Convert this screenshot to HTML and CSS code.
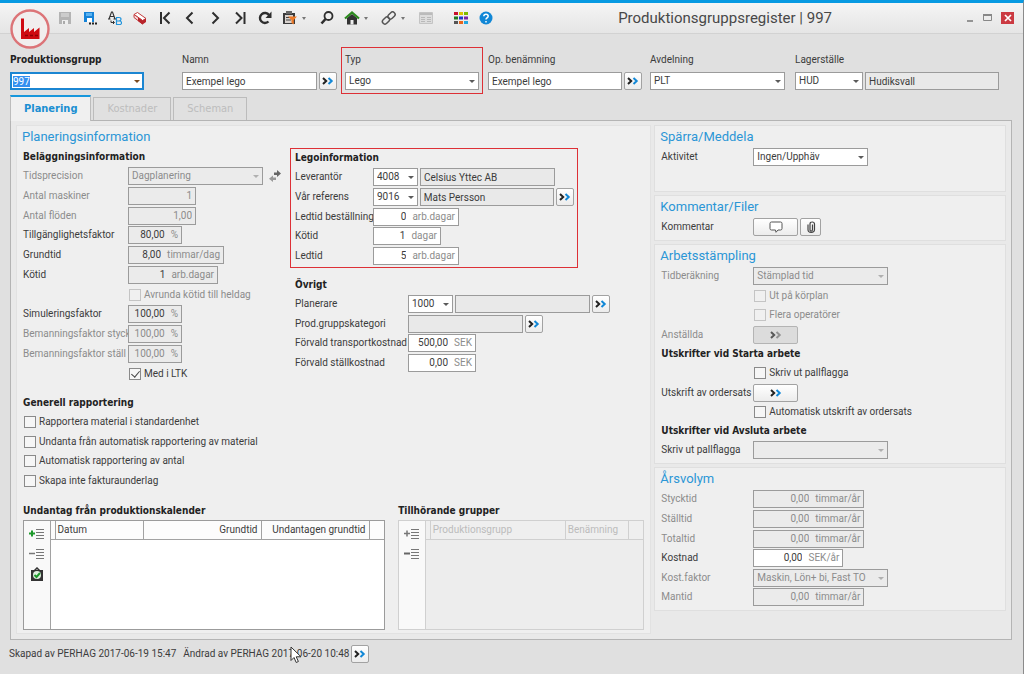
FILE: index.html
```html
<!DOCTYPE html>
<html lang="sv">
<head>
<meta charset="utf-8">
<title>Produktionsgruppsregister | 997</title>
<link rel="stylesheet" href="styles.css">
<script src="app.js" defer></script>
</head>
<body>
<svg class="defs" width="0" height="0" aria-hidden="true">
  <defs>
    <symbol id="chev" viewBox="0 0 12 8"><path class="chev-a" d="M1 1l3.2 3L1 7"/><path class="chev-b" d="M6.500 1l3.200 3-3.200 3"/></symbol>
    <symbol id="lines" viewBox="0 0 16 12"><path d="M7 1.500h8M7 4.500h8M7 7.500h8M7 10.500h8" stroke="#777" fill="none"/></symbol>
  </defs>
</svg>
<div class="window">
  <header class="titlebar">
    <svg class="logo" viewBox="0 0 40 40" aria-hidden="true"><circle cx="20" cy="20" r="18.500" fill="#f1eeee" stroke="#dc7478" stroke-width="2.400"/><path d="M11 30V9.500h3V23l5-4v4l5-4v4l5.500-4.500V30z" fill="#cf0a12"/><path d="M15 26.500h3m2 0h3m2 0h3" stroke="#8e0006" stroke-width="1.500"/></svg>
    <nav class="tools">
      <button class="tool" aria-label="Spara" disabled><svg width="14" height="14" viewBox="0 0 14 14"><path d="M1 1h12v12H1z" fill="#b4b4b4"/><path d="M3 2h8v4H3z" fill="#ccc"/><path d="M4 9h6v4H4z" fill="#eee"/><path d="M5 10h2v3H5z" fill="#aaa"/></svg></button>
      <button class="tool" aria-label="Spara som"><svg width="14" height="14" viewBox="0 0 14 14"><path d="M1 1h10v10H1z" fill="#1583d8"/><path d="M3 2h6v3H3z" fill="#5db3f0"/><path d="M4 7h5v4H4z" fill="#fff"/><path d="M6 12.500h2m1 0h2m1 0h2" stroke="#222" stroke-width="2"/></svg></button>
      <button class="tool" aria-label="Byt namn"><svg width="14" height="14" viewBox="0 0 14 14" fill="none"><path d="M1 8L3.500 1h1L7 8M2 5.500h4M0 8h2.500M5.500 8H8" stroke="#333" stroke-width="1.100"/><path d="M3 9.500v2h3M5 10l1.500 1.500L5 13" stroke="#333"/><path d="M8.500 6.500v7M8 6.500h3q2 0 2 1.700T11 10H9h2.500q2 0 2 1.800t-2 1.700H8" stroke="#2094dc" stroke-width="1.200"/></svg></button>
      <button class="tool" aria-label="Radera"><svg width="14" height="14" viewBox="0 0 14 14"><path d="M1 3.500L4.500 1.500 13 7.500 9.500 9.500z" fill="#fff" stroke="#c53a3c"/><path d="M1 3.500v3l8.500 6.500V9.500z" fill="#f4dada" stroke="#c53a3c"/><path d="M5 6.500l4.500 3L13 7.500v3.500L9.500 13.500 5 10z" fill="#b8242b"/></svg></button>
      <button class="tool" aria-label="Första"><svg class="stroke" width="12" height="14" viewBox="0 0 12 14"><path d="M2 1v12M10.500 1.500L5 7l5.500 5.500"/></svg></button>
      <button class="tool" aria-label="Föregående"><svg class="stroke" width="12" height="14" viewBox="0 0 12 14"><path d="M8.500 1.500L3 7l5.500 5.500"/></svg></button>
      <button class="tool" aria-label="Nästa"><svg class="stroke" width="12" height="14" viewBox="0 0 12 14"><path d="M3.500 1.500L9 7l-5.500 5.500"/></svg></button>
      <button class="tool" aria-label="Sista"><svg class="stroke" width="12" height="14" viewBox="0 0 12 14"><path d="M10.500 1v12M2 1.500L7.500 7 2 12.500"/></svg></button>
      <button class="tool" aria-label="Uppdatera"><svg width="14" height="14" viewBox="0 0 14 14"><path d="M10.500 10.500A5 5 0 1 1 11 4" fill="none" stroke="#2e2e2e" stroke-width="2.400"/><path d="M13.500 0.500v6.500H7.500z" fill="#2e2e2e"/></svg></button>
      <button class="tool tool-drop" aria-label="Klistra in"><svg width="15" height="14" viewBox="0 0 15 14"><path d="M1 2h12v11H1z" fill="#3b3b3b"/><path d="M4 0h6v3H4z" fill="#666"/><path d="M3 4h8v8H3z" fill="#d8d2ce"/><path d="M4 6.500h6M4 9h5" stroke="#444"/><path d="M6 5.500h9L11.800 9v4.500L9.500 12V9z" fill="#ee7a28"/></svg></button>
      <button class="tool" aria-label="Sök"><svg width="14" height="14" viewBox="0 0 14 14" fill="none" stroke="#2e2e2e"><circle cx="8.500" cy="5" r="4" stroke-width="1.800"/><path d="M5.500 8L1.500 12.500" stroke-width="2.600"/></svg></button>
      <button class="tool tool-drop" aria-label="Hem"><svg width="16" height="14" viewBox="0 0 16 14"><path d="M3 7l5-4 5 4v6.500H3z" fill="#333"/><path d="M6.500 9h3v4.500h-3z" fill="#eee"/><path d="M1 7.500L8 1.500l7 6" fill="none" stroke="#2c8a1e" stroke-width="2.200"/></svg></button>
      <button class="tool tool-drop" aria-label="Länk"><svg width="15" height="14" viewBox="0 0 15 14" fill="none" stroke="#555" stroke-width="1.500"><rect x="6.500" y="2" width="8" height="5" rx="2.500" transform="rotate(-45 10.500 4.500)"/><rect x="1" y="7" width="8" height="5" rx="2.500" transform="rotate(-45 5 9.500)"/></svg></button>
      <button class="tool" aria-label="Lista" disabled><svg width="14" height="12" viewBox="0 0 14 12"><path d="M.5.500h13v11H.5z" fill="#ddd" stroke="#c4c4c4"/><path d="M1 2h12" stroke="#bbb" stroke-width="2"/><path d="M2 5.500h4M8 5.500h4M2 7.500h4M8 7.500h4M2 9.500h4M8 9.500h4" stroke="#b9b9b9"/></svg></button>
      <button class="tool tool-apart" aria-label="Moduler"><svg width="14" height="14" viewBox="0 0 14 14"><path d="M0 1h4v3H0z" fill="#c8102e"/><path d="M5 1h4v3H5z" fill="#d9c400"/><path d="M10 1h4v3h-4z" fill="#7fba00"/><path d="M0 5.500h4v3H0z" fill="#1f7a1f"/><path d="M5 5.500h4v3H5z" fill="#2038c8"/><path d="M10 5.500h4v3h-4z" fill="#7a22a8"/><path d="M0 10h4v3H0z" fill="#555"/><path d="M5 10h4v3H5z" fill="#e8641b"/><path d="M10 10h4v3h-4z" fill="#22a7e0"/></svg></button>
      <button class="tool" aria-label="Hjälp"><svg width="14" height="14" viewBox="0 0 14 14"><circle cx="7" cy="7" r="6.500" fill="#1187d6"/><path d="M4.800 5.300Q4.900 3.200 7 3.200t2.200 1.900Q9.200 6.300 7.900 7 7 7.500 7 8.600M7 10v1.600" fill="none" stroke="#fff" stroke-width="1.500"/></svg></button>
    </nav>
    <h1 class="title">Produktionsgruppsregister | 997</h1>
    <div class="winctl">
      <button class="ctl" aria-label="Minimera"><svg width="8" height="10" viewBox="0 0 8 10"><path d="M1 8h6" stroke="#777" stroke-width="1.500"/></svg></button>
      <button class="ctl" aria-label="Maximera"><svg width="9" height="8" viewBox="0 0 9 8"><path d="M.5 1.500h8v5h-8z" fill="none" stroke="#888"/><path d="M0 1h9" stroke="#888" stroke-width="2"/></svg></button>
      <button class="ctl ctl-close" aria-label="Stäng"><svg width="8" height="8" viewBox="0 0 8 8"><path d="M1 1l6 6M7 1L1 7" stroke="#fff" stroke-width="1.700"/></svg></button>
    </div>
  </header>

  <section class="keys">
    <div class="field field-first"><label class="strong" for="pg">Produktionsgrupp</label><div class="line"><span class="combo grow focus"><input id="pg" class="ctrl" value="997"></span></div></div>
    <div class="field field-name"><label for="namn">Namn</label><div class="line"><input id="namn" class="ctrl grow" value="Exempel lego"><button class="go" aria-label="Visa namn"><svg class="chev"><use href="#chev"/></svg></button></div></div>
    <div class="field field-type"><label for="typ">Typ</label><div class="line"><span class="combo grow"><select id="typ" class="ctrl"><option>Lego</option></select></span></div></div>
    <div class="field field-op"><label for="op">Op. benämning</label><div class="line"><input id="op" class="ctrl grow" value="Exempel lego"><button class="go" aria-label="Visa benämning"><svg class="chev"><use href="#chev"/></svg></button></div></div>
    <div class="field field-avd"><label for="avd">Avdelning</label><div class="line"><span class="combo grow"><select id="avd" class="ctrl"><option>PLT</option></select></span></div></div>
    <div class="field"><label for="lager">Lagerställe</label><div class="line"><span class="combo w68"><select id="lager" class="ctrl"><option>HUD</option></select></span><input class="ctrl grow" aria-label="Lagernamn" value="Hudiksvall" readonly></div></div>
  </section>

  <div class="tabs" role="tablist">
    <button class="tab tab-on" role="tab" aria-selected="true">Planering</button>
    <button class="tab" role="tab" disabled>Kostnader</button>
    <button class="tab" role="tab" disabled>Scheman</button>
  </div>

  <main class="sheet">
    <section class="plan">
      <h2>Planeringsinformation</h2>
      <div class="plan-cols">
        <div class="stack col-a">
          <h3>Beläggningsinformation</h3>
          <div class="rows">
            <div class="row off"><label for="tp">Tidsprecision</label><span class="combo w135"><select id="tp" class="ctrl" disabled><option>Dagplanering</option></select></span><svg class="swap" width="12" height="12" viewBox="0 0 12 12" aria-hidden="true"><path d="M5 2.500h3V0l4 3.500L8 7V5H5z" fill="#666"/><path d="M7 7.500H4V5.500L0 8.700 4 12v-2h3z" fill="#999"/></svg></div>
            <div class="row off"><label for="am">Antal maskiner</label><span class="unit w68"><input id="am" value="1" disabled></span></div>
            <div class="row off"><label for="af">Antal flöden</label><span class="unit w68"><input id="af" value="1,00" disabled></span></div>
          </div>
          <div class="rows">
            <div class="row"><label for="tf">Tillgänglighetsfaktor</label><span class="unit ro w54"><input id="tf" value="80,00" readonly><span>%</span></span></div>
            <div class="row"><label for="gt">Grundtid</label><span class="unit ro w96"><input id="gt" value="8,00" readonly><span>timmar/dag</span></span></div>
            <div class="row"><label for="kt">Kötid</label><span class="unit ro w90"><input id="kt" value="1" readonly><span>arb.dagar</span></span></div>
            <div class="row off"><span class="blank"></span><label class="check"><input type="checkbox" disabled>Avrunda kötid till heldag</label></div>
          </div>
          <div class="rows">
            <div class="row"><label for="sf">Simuleringsfaktor</label><span class="unit ro w54"><input id="sf" value="100,00" readonly><span>%</span></span></div>
            <div class="row off"><label for="bs">Bemanningsfaktor styck</label><span class="unit w54"><input id="bs" value="100,00" disabled><span>%</span></span></div>
            <div class="row off"><label for="bt">Bemanningsfaktor ställ</label><span class="unit w54"><input id="bt" value="100,00" disabled><span>%</span></span></div>
            <div class="row"><span class="blank"></span><label class="check"><input type="checkbox" checked>Med i LTK</label></div>
          </div>
        </div>
        <div class="col-b">
          <div class="stack lego">
            <h3>Legoinformation</h3>
            <div class="rows">
              <div class="row"><label for="lev">Leverantör</label><span class="combo w44"><select id="lev" class="ctrl"><option>4008</option></select></span><input class="ctrl w135" aria-label="Leverantörsnamn" value="Celsius Yttec AB" readonly></div>
              <div class="row"><label for="ref">Vår referens</label><span class="combo w44"><select id="ref" class="ctrl"><option>9016</option></select></span><input class="ctrl w135" aria-label="Referensnamn" value="Mats Persson" readonly><button class="go" aria-label="Visa referens"><svg class="chev"><use href="#chev"/></svg></button></div>
              <div class="row"><label for="lb">Ledtid beställning</label><span class="unit w86"><input id="lb" value="0"><span>arb.dagar</span></span></div>
            </div>
            <div class="rows">
              <div class="row"><label for="lk">Kötid</label><span class="unit w68"><input id="lk" value="1"><span>dagar</span></span></div>
              <div class="row"><label for="lt">Ledtid</label><span class="unit w86"><input id="lt" value="5"><span>arb.dagar</span></span></div>
            </div>
          </div>
          <div class="stack other">
            <h3>Övrigt</h3>
            <div class="rows">
              <div class="row"><label for="pl">Planerare</label><span class="combo w44"><select id="pl" class="ctrl"><option>1000</option></select></span><input class="ctrl w135" aria-label="Planerarens namn" readonly><button class="go" aria-label="Visa planerare"><svg class="chev"><use href="#chev"/></svg></button></div>
              <div class="row"><label for="pk">Prod.gruppskategori</label><input id="pk" class="ctrl w114" readonly><button class="go" aria-label="Visa kategori"><svg class="chev"><use href="#chev"/></svg></button></div>
            </div>
            <div class="rows">
              <div class="row"><label for="ft">Förvald transportkostnad</label><span class="unit w68"><input id="ft" value="500,00"><span>SEK</span></span></div>
              <div class="row"><label for="fs">Förvald ställkostnad</label><span class="unit w68"><input id="fs" value="0,00"><span>SEK</span></span></div>
            </div>
          </div>
        </div>
      </div>
      <div class="stack report">
        <h3>Generell rapportering</h3>
        <div class="rows">
          <label class="check"><input type="checkbox">Rapportera material i standardenhet</label>
          <label class="check"><input type="checkbox">Undanta från automatisk rapportering av material</label>
        </div>
        <div class="rows">
          <label class="check"><input type="checkbox">Automatisk rapportering av antal</label>
          <label class="check"><input type="checkbox">Skapa inte fakturaunderlag</label>
        </div>
      </div>
      <div class="lists">
        <section class="list-a">
          <h3>Undantag från produktionskalender</h3>
          <div class="list">
            <div class="list-tools">
              <button class="mini" aria-label="Lägg till"><svg width="16" height="12" viewBox="0 0 16 12"><path d="M0 5.500h6M3 2.500v6" stroke="#1e9a2c" stroke-width="2"/><use href="#lines"/></svg></button>
              <button class="mini" aria-label="Ta bort"><svg width="16" height="12" viewBox="0 0 16 12"><path d="M0 5.500h6" stroke="#777" stroke-width="1.500"/><use href="#lines"/></svg></button>
              <button class="mini" aria-label="Godkänn"><svg width="14" height="14" viewBox="0 0 14 14"><path d="M1 3h12v11H1z" fill="#333"/><path d="M4 4l3-3 3 3" fill="none" stroke="#333" stroke-width="1.500"/><circle cx="7" cy="8" r="4" fill="#dff0df"/><path d="M4.500 8l2 2L10 6" fill="none" stroke="#1e9a2c" stroke-width="1.900"/></svg></button>
            </div>
            <table class="tbl"><thead><tr><th class="stub"></th><th class="c-date">Datum</th><th class="c-basic num">Grundtid</th><th class="c-exc num">Undantagen grundtid</th><th></th></tr></thead></table>
          </div>
        </section>
        <section class="list-b">
          <h3>Tillhörande grupper</h3>
          <div class="list list-off">
            <div class="list-tools">
              <button class="mini" aria-label="Lägg till grupp"><svg width="16" height="12" viewBox="0 0 16 12"><path d="M0 5.500h6M3 2.500v6" stroke="#777" stroke-width="1.500"/><use href="#lines"/></svg></button>
              <button class="mini" aria-label="Ta bort grupp"><svg width="16" height="12" viewBox="0 0 16 12"><path d="M0 5.500h6" stroke="#666" stroke-width="2"/><use href="#lines"/></svg></button>
            </div>
            <table class="tbl"><thead><tr><th class="stub"></th><th class="c-group">Produktionsgrupp</th><th class="c-name">Benämning</th><th></th></tr></thead></table>
          </div>
        </section>
      </div>
    </section>

    <aside class="side">
      <section class="card card-tall">
        <h2>Spärra/Meddela</h2>
        <div class="row"><label for="akt">Aktivitet</label><span class="combo w114"><select id="akt" class="ctrl"><option>Ingen/Upphäv</option></select></span></div>
      </section>
      <section class="card">
        <h2>Kommentar/Filer</h2>
        <div class="row"><label for="kom">Kommentar</label><button id="kom" class="go go-wide"><svg width="14" height="12" viewBox="0 0 14 12"><path d="M2.500 1h9q1.500 0 1.500 1.500v5Q13 9 11.500 9H9L7 11.300 6.500 9h-4Q1 9 1 7.500v-5Q1 1 2.500 1z" fill="#fff" stroke="#555"/></svg></button><button class="go go-clip" aria-label="Bifoga fil"><svg width="10" height="12" viewBox="0 0 10 12"><path d="M6.500 3.500v5Q6.500 10 5.200 10T4 8.500V3Q4 1 6.200 1t2.300 2v5.500q0 2.800-3.300 2.800T2 8.500V3.500" fill="none" stroke="#444" stroke-width="1.200"/></svg></button></div>
      </section>
      <section class="card">
        <h2>Arbetsstämpling</h2>
        <div class="rows">
          <div class="row off"><label for="tb">Tidberäkning</label><span class="combo w135"><select id="tb" class="ctrl" disabled><option>Stämplad tid</option></select></span></div>
          <div class="row off"><span class="blank"></span><label class="check"><input type="checkbox" disabled>Ut på körplan</label></div>
        </div>
        <div class="rows">
          <div class="row off"><span class="blank"></span><label class="check"><input type="checkbox" disabled>Flera operatörer</label></div>
          <div class="row off"><label for="ans">Anställda</label><button id="ans" class="go go-wide" disabled><svg class="chev"><use href="#chev"/></svg></button></div>
        </div>
        <h3>Utskrifter vid Starta arbete</h3>
        <div class="rows">
          <div class="row"><span class="blank"></span><label class="check"><input type="checkbox">Skriv ut pallflagga</label></div>
          <div class="row"><label for="uo">Utskrift av ordersats</label><button id="uo" class="go go-wide"><svg class="chev"><use href="#chev"/></svg></button></div>
        </div>
        <div class="row"><span class="blank"></span><label class="check"><input type="checkbox">Automatisk utskrift av ordersats</label></div>
        <h3>Utskrifter vid Avsluta arbete</h3>
        <div class="row"><label for="su">Skriv ut pallflagga</label><span class="combo w135 dim"><select id="su" class="ctrl" disabled><option></option></select></span></div>
      </section>
      <section class="card">
        <h2>Årsvolym</h2>
        <div class="rows">
          <div class="row off"><label for="y1">Stycktid</label><span class="unit w111"><input id="y1" value="0,00" disabled><span>timmar/år</span></span></div>
          <div class="row off"><label for="y2">Ställtid</label><span class="unit w111"><input id="y2" value="0,00" disabled><span>timmar/år</span></span></div>
          <div class="row off"><label for="y3">Totaltid</label><span class="unit w111"><input id="y3" value="0,00" disabled><span>timmar/år</span></span></div>
        </div>
        <div class="rows">
          <div class="row"><label for="y4">Kostnad</label><span class="unit w90"><input id="y4" value="0,00"><span>SEK/år</span></span></div>
          <div class="row off"><label for="y5">Kost.faktor</label><span class="combo w135"><select id="y5" class="ctrl" disabled><option>Maskin, Lön+ bi, Fast TO</option></select></span></div>
        </div>
        <div class="row off"><label for="y6">Mantid</label><span class="unit w111"><input id="y6" value="0,00" disabled><span>timmar/år</span></span></div>
      </section>
    </aside>
  </main>

  <footer class="status">
    <span>Skapad av PERHAG 2017-06-19 15:47</span>
    <span class="changed">Ändrad av PERHAG 2017-06-20 10:48<svg class="pointer" width="12" height="18" viewBox="0 0 12 18" aria-hidden="true"><path d="M1 1v13.500l3-3 2.200 5 2.200-1-2.200-4.700H11z" fill="#fff" stroke="#333"/></svg></span>
    <button class="go" aria-label="Visa historik"><svg class="chev"><use href="#chev"/></svg></button>
  </footer>
</div>
</body>
</html>
```

FILE: styles.css
```css
* { box-sizing: border-box; }

body {
  margin: 0;
  background: #e0e0e0;
  color: #3c3c3c;
  font: 10px/18px Roboto, "Liberation Sans", sans-serif;
}

button, input, select { font: inherit; color: inherit; }
button { padding: 0; border: 0; background: none; }

h1, h2, h3 { margin: 0; }
h2 { margin: 0 0 1px -1px; font-size: 13px; line-height: 20px; font-weight: 400; color: #2b96d6; }
h3, .strong { font: 700 10px/18px "DejaVu Sans Condensed", "Noto Sans", sans-serif; color: #222; }

.defs { position: absolute; }

.window {
  display: flex;
  flex-direction: column;
  min-height: 100vh;
  border-top: 3px solid #089ae2;
  border-right: 1px solid #8b8b8b;
}

/* Title bar */
.titlebar {
  position: relative;
  display: flex;
  align-items: center;
  height: 31px;
  padding: 0 9px 0 52px;
  border-bottom: 1px solid #d2d2d2;
  background: linear-gradient(#f5f5f5, #e5e5e5);
}
.logo { position: absolute; left: 10px; top: 6px; width: 40px; height: 40px; }
.tools { display: flex; }
.tool { position: relative; display: flex; align-items: center; justify-content: center; width: 25px; height: 28px; }
.tool-drop { width: 37px; padding-right: 12px; }
.tool-drop::after {
  content: "";
  position: absolute;
  right: 8px;
  top: 13px;
  border: 2px solid transparent;
  border-top: 3px solid #777;
}
.tool-apart { margin-left: 10px; }
.stroke { fill: none; stroke: #2e2e2e; stroke-width: 2; }
.title { margin-left: auto; font-size: 15px; line-height: 26px; font-weight: 400; color: #484848; }
.winctl { display: flex; align-items: center; gap: 9px; margin-left: 134px; }
.ctl { display: flex; align-items: center; justify-content: center; height: 12px; }
.ctl-close { width: 13px; background: #cb3a42; }

/* Controls */
.ctrl {
  display: block;
  min-width: 0;
  height: 18px;
  padding: 0 3px;
  border: 1px solid #9b9b9b;
  border-radius: 0;
  background: #fff;
  line-height: 16px;
  appearance: none;
  outline: 0;
}
.ctrl:read-only:not(select) { background: #e9e9e9; }
.ctrl:disabled { background: #ebebeb; color: #8c8c8c; opacity: 1; }
.combo { position: relative; display: block; }
.combo .ctrl { width: 100%; }
.combo::after {
  content: "";
  position: absolute;
  right: 4px;
  top: 8px;
  border: 3px solid transparent;
  border-top-color: #5a5a5a;
  border-bottom: 0;
  pointer-events: none;
}
.off .combo::after, .dim::after { border-top-color: #b0b0b0; }
.focus .ctrl { border: 2px solid #1b86d2; padding: 0 1px; }
.focus::after { border-top-color: #7a4a1e; }
.ctrl::selection { background: #3390f0; color: #fff; }

.unit {
  display: flex;
  height: 18px;
  padding-right: 3px;
  border: 1px solid #9b9b9b;
  background: #fff;
  line-height: 16px;
}
.unit input {
  flex: 1;
  min-width: 0;
  width: 0;
  padding: 0;
  border: 0;
  background: transparent;
  text-align: right;
  outline: 0;
}
.unit span { margin-left: 6px; color: #8c8c8c; }
.ro, .off .unit { background: #ebebeb; }
.off .unit input { color: #8c8c8c; }

.go {
  display: flex;
  flex: none;
  align-items: center;
  justify-content: center;
  width: 18px;
  height: 18px;
  border: 1px solid #a2a2a2;
  border-radius: 2px;
  background: linear-gradient(#fff, #ececec);
}
.go-wide { width: 45px; }
.go-clip { width: 21px; }
.go:disabled { background: #dcdcdc; border-color: #b4b4b4; }
.chev { width: 12px; height: 8px; fill: none; stroke-width: 2; }
.chev-a { stroke: #222; }
.chev-b { stroke: #1187d6; }
.go:disabled .chev { filter: grayscale(1); opacity: .7; }

.check { display: flex; align-items: center; gap: 3px; height: 18px; margin-left: 1px; }
.check input {
  display: grid;
  width: 12px;
  height: 12px;
  margin: 0;
  border: 1px solid #8a8a8a;
  background: #f6f6f6;
  appearance: none;
}
.check input:disabled { border-color: #c4c4c4; background: #f0f0f0; }
.check input:checked::after {
  content: "";
  width: 4px;
  height: 7px;
  margin-left: 3px;
  border: solid #444;
  border-width: 0 1px 1px 0;
  transform: rotate(40deg);
}

.grow { flex: 1; }
.w44 { width: 45px; }
.w54 { width: 54px; }
.w68 { width: 68px; }
.w86 { width: 86px; }
.w90 { width: 90px; }
.w96 { width: 96px; }
.w111 { width: 111px; }
.w114 { width: 115px; }
.w135 { width: 135px; }

/* Key fields */
.keys {
  display: grid;
  grid-template-columns: 172fr 163fr 143fr 162fr 145fr 204fr;
  padding: 17px 24px 5px 10px;
}
.field { min-width: 0; }
.field > label { display: block; height: 21px; }
.line { display: flex; gap: 2px; }
.field-first { padding-right: 38px; }
.field-name, .field-op { padding-right: 8px; }
.field-type { margin-right: 9px; outline: 1px solid #dd3036; outline-offset: 3px; }
.field-avd { padding-right: 10px; }

/* Tabs */
.tabs { display: flex; align-items: flex-end; gap: 2px; padding-left: 10px; }
.tab {
  height: 23px;
  padding: 0 13px;
  border: 1px solid #bcbcbc;
  border-bottom: 0;
  background: #e0e0e0;
  color: #bdbdbd;
  font: 11px/20px "DejaVu Sans Condensed", "Noto Sans", sans-serif;
}
.tab-on {
  position: relative;
  height: 26px;
  margin-bottom: -1px;
  border-top: 2px solid #1797dc;
  background: #f0f0f0;
  color: #1b8fd2;
  font-weight: 700;
}

/* Sheet */
.sheet {
  display: grid;
  flex: 1;
  grid-template-columns: 636fr 352fr;
  align-items: start;
  gap: 3px;
  margin: 0 11px 0 10px;
  padding: 4px 5px 5px;
  border: 1px solid #b4b4b4;
  background: #e9e9e9;
}
.plan {
  align-self: stretch;
  min-width: 0;
  padding: 1px 6px 3px;
  border: 1px solid #e2e2e2;
  background: #efefef;
}
.plan-cols { display: flex; }
.stack, .card { display: flex; flex-direction: column; gap: 1px; }
.card h2 { margin-bottom: 0; }
.rows { display: flex; flex-direction: column; gap: 2px; }
.row { display: flex; align-items: center; gap: 2px; height: 18px; }
.row > label:first-child, .blank { flex: none; white-space: nowrap; }
.off { color: #8c8c8c; }
.swap { margin-left: 4px; }

.col-a { width: 267px; }
.col-a .row > :first-child { width: 103px; }
.lego { padding: 0 3px 2px 4px; width: 288px; border: 1px solid #dd3036; }
.lego .row > :first-child { width: 76px; }
.other { margin-top: 8px; padding-left: 5px; }
.other .row > :first-child { width: 111px; }
.report { margin-top: 11px; }

.lists { display: grid; grid-template-columns: 362fr 246fr; gap: 13px; margin-top: 12px; }
.list { display: flex; height: 110px; border: 1px solid #9b9b9b; background: #fff; }
.list-tools {
  display: flex;
  flex: none;
  flex-direction: column;
  gap: 2px;
  width: 27px;
  padding-top: 4px;
  border-right: 1px solid #a2a2a2;
  background: #f9f9f9;
}
.mini { display: flex; align-items: center; justify-content: center; height: 18px; }
.tbl { flex: 1; align-self: flex-start; table-layout: fixed; border-collapse: collapse; }
.tbl th {
  height: 18px;
  padding: 0 3px 0 2px;
  border: solid #a2a2a2;
  border-width: 0 0 1px 1px;
  background: #fcfcfc;
  font-weight: 400;
  text-align: left;
  line-height: 17px;
  white-space: nowrap;
}
.tbl th:first-child { border-left: 0; }
.tbl .num { text-align: right; }
.stub { width: 4px; }
.tbl .stub { padding: 0; }
.c-date { width: 88px; }
.c-basic { width: 118px; }
.c-exc { width: 108px; }
.c-group { width: 135px; }
.c-name { width: 63px; }
.list-off, .list-off .list-tools { border-color: #d0d0d0; }
.list-off { background: #ededed; }
.list-off .tbl th { background: #efefef; color: #bcbcbc; border-color: #d0d0d0; }

/* Side cards */
.side { display: flex; flex-direction: column; gap: 3px; min-width: 0; }
.card { padding: 1px 6px 4px; border: 1px solid #dfdfdf; background: #efefef; }
.card-tall { padding-bottom: 25px; }
.card .row > :first-child { width: 90px; }

/* Status line */
.status { display: flex; align-items: center; gap: 2px; height: 34px; padding: 0 9px 6px; }
.changed { position: relative; margin-left: 5px; }
.pointer { position: absolute; left: 107px; top: 1px; }
```

FILE: app.js
```js
const key = document.getElementById("pg");
key.focus();
key.select();
```
